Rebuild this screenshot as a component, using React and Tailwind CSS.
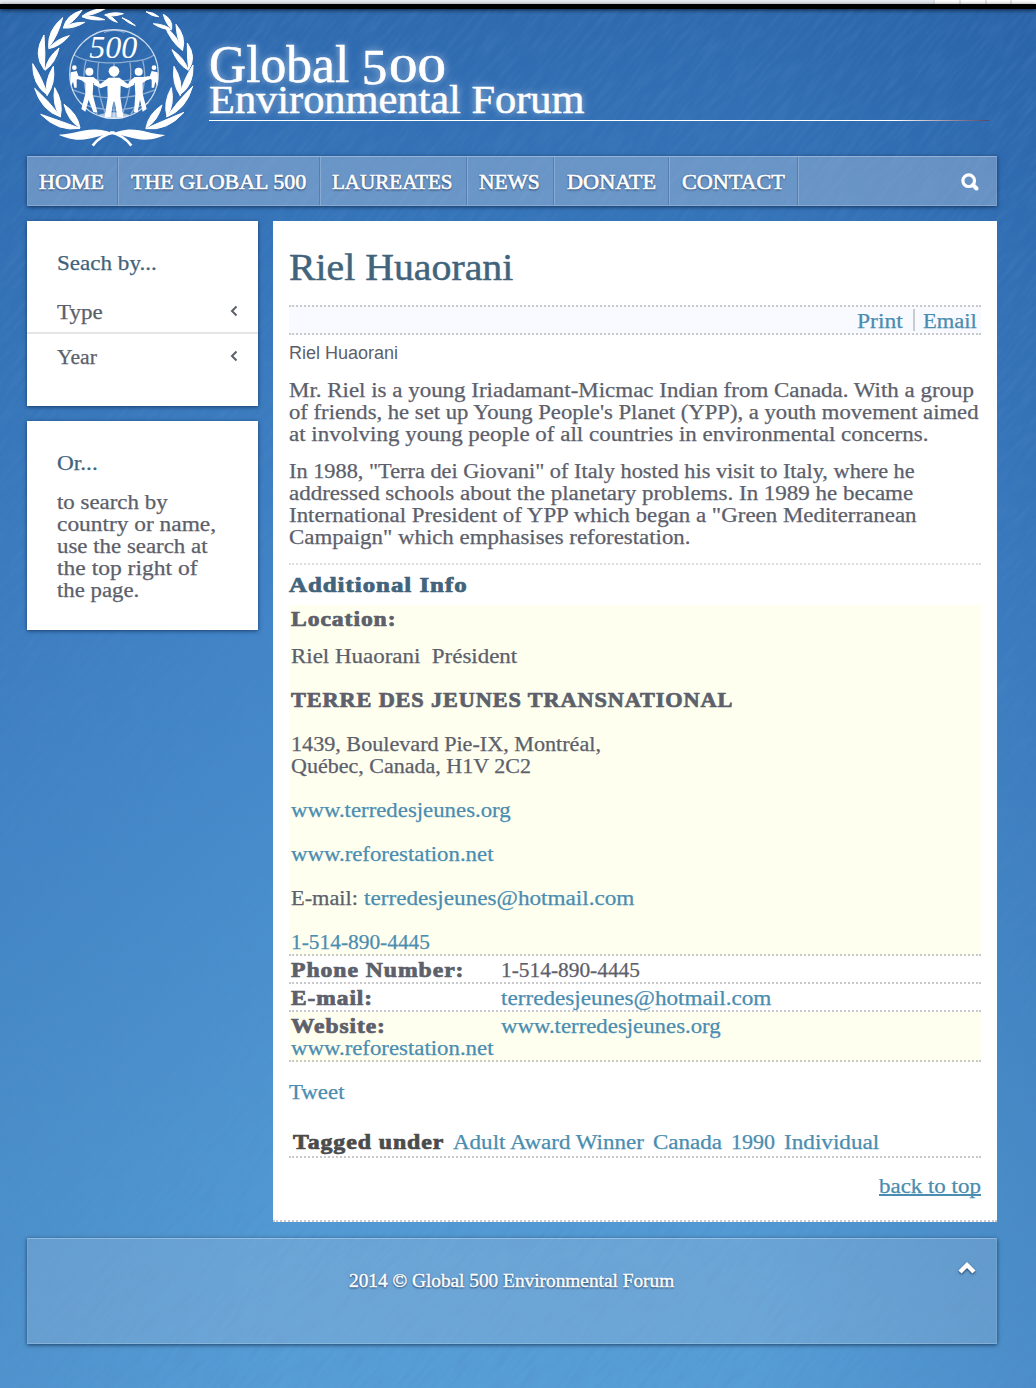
import React, { useLayoutEffect, useRef, useState } from 'react';

// A single line of text, widened so that it spans w pixels.
function Fit({ w, children, className = '' }) {
  const ref = useRef(null);
  const [k, setK] = useState(1);
  useLayoutEffect(() => {
    setK(w / ref.current.offsetWidth);
  }, []);
  return (
    <span className={`inline-block whitespace-pre ${className}`} style={{ width: w }}>
      <span ref={ref} className="inline-block origin-left" style={{ transform: `translateY(0.6px) scaleX(${k})` }}>{children}</span>
    </span>
  );
}

const link = 'text-[#4a8db0]';
const bold = 'font-bold tracking-[0.8px] [-webkit-text-stroke:0.7px_currentColor]';

function leaf([x1, y1, x2, y2, w = 20, b = 0]) {
  const dx = x2 - x1, dy = y2 - y1, l = Math.hypot(dx, dy);
  const nx = -dy / l, ny = dx / l;
  const mx = x1 + dx * 0.55, my = y1 + dy * 0.55;
  return `M${x1} ${y1}Q${mx + nx * (w + b)} ${my + ny * (w + b)} ${x2} ${y2}Q${mx - nx * (w - b)} ${my - ny * (w - b)} ${x1} ${y1}Z`;
}

const leaves = [
  [246, 30, 190, 82, 16, 6], [254, 66, 190, 83, 11, 0],
  [188, 52, 146, 142, 18, 8], [208, 106, 146, 145, 13, 0],
  [132, 104, 133, 208, 20, 16], [177, 143, 135, 210, 15, 0],
  [98, 190, 142, 284, 18, 10], [160, 198, 141, 286, 18, 0],
  [104, 264, 182, 350, 18, 12], [164, 262, 181, 349, 18, 0],
  [122, 342, 240, 384, 17, 16], [192, 312, 240, 383, 18, 0],
  [318, 24, 246, 48, 11, 2], [314, 58, 246, 49, 9, 0],
  [370, 40, 314, 44, 9, 0], [352, 66, 316, 42, 8, 0],
  [438, 34, 476, 49, 7, 0], [366, 52, 406, 76, 5, 0],
  [490, 42, 515, 86, 13, -5], [460, 70, 515, 88, 9, 0],
  [528, 72, 548, 149, 15, -6], [494, 76, 548, 151, 13, 0],
  [562, 128, 566, 208, 15, -12], [516, 148, 565, 210, 14, 0],
  [579, 194, 539, 284, 18, -10], [522, 198, 541, 286, 18, 0],
  [578, 258, 500, 350, 18, -12], [514, 262, 501, 349, 18, 0],
  [552, 336, 437, 385, 17, -16], [486, 314, 438, 383, 18, 0],
];

function Logo() {
  return (
    <svg viewBox="90 26 500 424" className="h-[141.3px] w-[166.7px] shrink-0" fill="white">
      {leaves.map((l, i) => <path key={i} d={leaf(l)} stroke="white" strokeWidth="3" strokeLinejoin="round" />)}
      <path d="M176 403C230 400 250 384 296 388 320 390 332 396 342 401 300 402 276 418 240 418 210 418 192 410 176 403Z" />
      <path d="M496 404C450 402 430 386 380 388 360 390 346 396 334 401 372 402 400 418 434 418 462 418 482 410 496 404Z" />
      <path d="M278 436Q302 404 344 396M394 436Q370 404 330 396" fill="none" stroke="white" strokeWidth="8" />
      <g fill="none" stroke="white" strokeWidth="4" opacity=".45">
        <path d="M222 164Q250 182 300 186T384 184Q440 182 462 164M209 222Q342 262 475 222M216 268Q342 318 468 268M240 308Q342 350 446 308M258 180Q236 262 292 342M296 186Q284 260 320 350M342 188V354M390 186Q400 260 364 350M428 180Q450 262 392 342M312 96Q342 84 374 96" />
      </g>
      <circle cx="342" cy="221" r="133" fill="none" stroke="white" strokeWidth="3.5" opacity=".75" />
      <text x="340" y="172" textAnchor="middle" fontSize="97" textLength="144" lengthAdjust="spacingAndGlyphs" className="[font-family:'Liberation_Serif',serif] italic">500</text>
      <circle cx="342" cy="213" r="16" />
      <path d="M326 232H358L382 250 400 244 403 253 382 264 362 256 361 290 370 350H352L344 304H340L332 350H314L323 290 322 256 302 264 281 253 284 244 302 250Z" />
      <circle cx="268" cy="214" r="12" />
      <path d="M256 230H280L298 245 294 255 280 248 278 282 292 336 280 336 266 298 256 334 244 326 256 280 256 248 244 240 232 236 235 228Z" />
      <circle cx="416" cy="214" r="12" />
      <path d="M428 230H404L386 245 390 255 404 248 406 282 402 336 413 336 420 298 428 334 440 326 428 280 428 248 440 240 452 236 449 228Z" />
      <circle cx="223" cy="202" r="7" />
      <path d="M212 216L230 212 238 234 230 238 230 262H223L219 244 213 258 211 236Z" />
      <circle cx="462" cy="202" r="7" />
      <path d="M473 216L455 212 447 234 455 238 455 262H462L466 244 472 258 474 236Z" />
      <path d="M292 344Q342 328 392 344L366 355H318Z" opacity=".6" />
    </svg>
  );
}

const nav = [
  ['HOME', 65, 'w-[90px] pl-[11px]'],
  ['THE GLOBAL 500', 175, 'w-[202px] pl-[13px]'],
  ['LAUREATES', 120, 'w-[147px] pl-[12px]'],
  ['NEWS', 61, 'w-[87px] pl-[12px]'],
  ['DONATE', 89, 'w-[115px] pl-[13px]'],
  ['CONTACT', 103, 'w-[129px] pl-[13px]'],
];

function Streaks() {
  return (
    <div className="pointer-events-none absolute inset-0 -z-10 overflow-hidden">
      <svg className="absolute -left-[400px] -top-[250px] h-[1900px] w-[1900px] -rotate-[50deg] opacity-30">
        <filter id="streaks" x="0" y="0" width="100%" height="100%">
          <feTurbulence type="fractalNoise" baseFrequency="0.03 0.22" numOctaves="3" seed="4" />
          <feColorMatrix values="0 0 0 0 0.08  0 0 0 0 0.25  0 0 0 0 0.55  1.8 0 0 0 -0.7" />
        </filter>
        <rect width="100%" height="100%" filter="url(#streaks)" />
      </svg>
    </div>
  );
}

const panel = 'border border-t-white/30 border-x-white/10 border-b-white/20 shadow-[0_1px_4px_rgba(0,20,50,0.65)]';
const dotB = 'border-b-2 border-dotted border-[#c8c9cb]';

export default function App() {
  return (
    <div className="relative isolate flex h-[1388px] w-[1036px] flex-col overflow-hidden bg-[linear-gradient(90deg,rgba(20,70,140,0.12),transparent_28%,transparent_72%,rgba(20,70,140,0.18)),linear-gradient(180deg,#2e69ae_0%,#3573b8_14%,#4285c8_45%,#5299d3_86%,#589ed6_100%)] font-['Liberation_Serif',serif] text-[20px] leading-[22px] text-[#5c606b] [-webkit-text-stroke:0.25px_currentColor]">
      <Streaks />
      <div className="flex h-1 shrink-0 justify-end bg-[#e9edf3]">
        <div className="flex w-[103px] gap-[2px] bg-[#e1e1e1] pl-[2px]">
          {[0, 1, 2, 3].map((i) => <div key={i} className="flex-1 bg-white" />)}
        </div>
      </div>
      <div className="h-[5px] shrink-0 bg-black shadow-[0_1px_4px_rgba(0,0,0,0.7)]" />

      <header className="flex h-[147px] shrink-0 pl-[30px]">
        <Logo />
        <div className="ml-[12px] flex w-[780px] flex-col pt-[27px] text-white [text-shadow:0_0_8px_rgba(255,255,255,0.6)] [-webkit-text-stroke:0.5px_white]">
          <div className="flex h-[43px] items-start text-[53px] leading-[54px]">
            <Fit w={140}>Global</Fit>
            <span className="relative top-[4px] ml-[13px] text-[51px]">5</span>
            <span className="relative top-[4px] ml-[2px] text-[41px]"><Fit w={57}>00</Fit></span>
          </div>
          <div className="h-[41px] text-[40px] leading-[40px]"><Fit w={375}>Environmental Forum</Fit></div>
          <div className="h-px bg-[linear-gradient(90deg,white_88%,rgba(90,60,90,0.8))]" />
        </div>
      </header>

      <nav className={`mx-[27px] flex h-[50px] w-[970px] shrink-0 bg-[#c8d2e2]/36 ${panel} text-white`}>
        {nav.map(([label, w, cls]) => (
          <a key={label} className={`${cls} flex shrink-0 items-center border-r border-[#4a6e9d]/60 shadow-[1px_0_0_rgba(255,255,255,0.2)] [text-shadow:0_1px_2px_rgba(0,20,50,0.9)] [-webkit-text-stroke:0.6px_white]`}>
            <Fit w={w}>{label}</Fit>
          </a>
        ))}
        <svg viewBox="0 0 18 18" className="mt-[16px] mr-[17px] ml-auto h-[18px] w-[18px]" fill="none" stroke="white">
          <circle cx="7.7" cy="7.7" r="5.8" strokeWidth="3.2" />
          <path d="M12 12L15.5 15.5" strokeWidth="4" strokeLinecap="round" />
        </svg>
      </nav>

      <div className="mt-[15px] ml-[27px] flex h-[1001px] shrink-0 items-start gap-[15px]">
        <aside className="flex w-[231px] flex-col gap-[15px]">
          <section className="h-[185px] bg-white pt-[30px] shadow-[0_1px_4px_rgba(0,20,50,0.6)]">
            <h3 className="pl-[30px] text-[21px] text-[#41647c]"><Fit w={100}>Seach by...</Fit></h3>
            {[['Type', 46], ['Year', 40]].map(([t, w], i) => (
              <div key={t} className={i ? 'flex h-[44px] items-center justify-between pr-5 pl-[30px]' : 'mt-[17px] flex h-[44px] items-center justify-between border-b-2 border-[#e5e5e5] pr-5 pl-[30px]'}>
                <Fit w={w}>{t}</Fit>
                <svg viewBox="0 0 8 12" className="h-3 w-2" fill="none" stroke="#5c606b" strokeWidth="2"><path d="M6.5 1.5L2 6L6.5 10.5" /></svg>
              </div>
            ))}
          </section>
          <section className="h-[209px] bg-white pt-[30px] pl-[30px] shadow-[0_1px_4px_rgba(0,20,50,0.6)]">
            <h3 className="mb-[17px] text-[21px] text-[#41647c]"><Fit w={41}>Or...</Fit></h3>
            {[['to search by', 111], ['country or name,', 159], ['use the search at', 151], ['the top right of', 140], ['the page.', 82]].map(([t, w]) => (
              <div key={t} className="h-[22px]"><Fit w={w}>{t}</Fit></div>
            ))}
          </section>
        </aside>

        <main className={`h-[1001px] w-[724px] bg-white px-4 ${dotB}`}>
          <h1 className="h-[84px] pt-[23px] text-[38px] leading-[44px] text-[#41647c] [-webkit-text-stroke:0.5px_currentColor]"><Fit w={224}>Riel Huaorani</Fit></h1>
          <div className={`flex h-[30px] items-center justify-end border-t-2 bg-[#f9faff] pr-1 ${dotB} ${link}`}>
            <Fit w={46}>Print</Fit>
            <span className="mr-[8px] ml-[10px] h-[22px] w-[2px] bg-[#c8cccf]" />
            <Fit w={54}>Email</Fit>
          </div>
          <div className="mt-[7px] h-[22px] font-['Liberation_Sans',sans-serif] text-[18px] [-webkit-text-stroke:0px]">Riel Huaorani</div>
          <div className="mt-[14px]">
            {[
              ['Mr. Riel is a young Iriadamant-Micmac Indian from Canada. With a group', 685],
              ["of friends, he set up Young People's Planet (YPP), a youth movement aimed", 690],
              ['at involving young people of all countries in environmental concerns.', 640],
            ].map(([t, w]) => <div key={t} className="h-[22px]"><Fit w={w}>{t}</Fit></div>)}
          </div>
          <div className="mt-[15px] h-[106px] border-b-2 border-dotted border-[#dddddd]">
            {[
              ['In 1988, "Terra dei Giovani" of Italy hosted his visit to Italy, where he', 626],
              ['addressed schools about the planetary problems. In 1989 he became', 624],
              ['International President of YPP which began a "Green Mediterranean', 628],
              ['Campaign" which emphasises reforestation.', 401],
            ].map(([t, w]) => <div key={t} className="h-[22px]"><Fit w={w}>{t}</Fit></div>)}
          </div>
          <h4 className={`h-[40px] pt-[8px] text-[#41647c] ${bold}`}><Fit w={179}>Additional Info</Fit></h4>
          <div className={`h-[351px] bg-[#fffff0] px-[2px] pt-[2px] ${dotB}`}>
            <div className={bold}><Fit w={105}>Location:</Fit></div>
            <div className="mt-[15px]"><Fit w={226}>{'Riel Huaorani\u00a0 Président'}</Fit></div>
            <div className={`mt-[22px] ${bold}`}><Fit w={442}>TERRE DES JEUNES TRANSNATIONAL</Fit></div>
            <div className="mt-[22px] h-[22px]"><Fit w={310}>1439, Boulevard Pie-IX, Montréal,</Fit></div>
            <div className="h-[22px]"><Fit w={240}>Québec, Canada, H1V 2C2</Fit></div>
            <div className={`mt-[22px] h-[22px] ${link}`}><Fit w={220}>www.terredesjeunes.org</Fit></div>
            <div className={`mt-[22px] h-[22px] ${link}`}><Fit w={203}>www.reforestation.net</Fit></div>
            <div className="mt-[22px] flex h-[22px] gap-[6px]"><Fit w={67}>E-mail:</Fit><span className={link}><Fit w={270}>terredesjeunes@hotmail.com</Fit></span></div>
            <div className={`mt-[22px] h-[22px] ${link}`}><Fit w={139}>1-514-890-4445</Fit></div>
          </div>
          <div className={`flex h-[28px] px-[2px] pt-[2px] ${dotB}`}>
            <span className={`w-[210px] ${bold}`}><Fit w={174}>Phone Number:</Fit></span><Fit w={139}>1-514-890-4445</Fit>
          </div>
          <div className={`flex h-[28px] px-[2px] pt-[2px] ${dotB}`}>
            <span className={`w-[210px] ${bold}`}><Fit w={82}>E-mail:</Fit></span><Fit w={270} className={link}>terredesjeunes@hotmail.com</Fit>
          </div>
          <div className={`h-[50px] bg-[#fffff0] px-[2px] pt-[2px] ${dotB}`}>
            <div className="flex h-[22px]"><span className={`w-[210px] ${bold}`}><Fit w={95}>Website:</Fit></span><Fit w={220} className={link}>www.terredesjeunes.org</Fit></div>
            <div className={link}><Fit w={203}>www.reforestation.net</Fit></div>
          </div>
          <div className={`mt-[18px] h-[22px] ${link}`}><Fit w={56}>Tweet</Fit></div>
          <div className={`mt-[26px] flex h-[30px] gap-[9px] pt-[2px] pl-[4px] ${dotB} ${link}`}>
            <span className={`text-[#4b4b4b] ${bold}`}><Fit w={151}>Tagged under</Fit></span>
            <Fit w={191}>Adult Award Winner</Fit><Fit w={69}>Canada</Fit><Fit w={44}>1990</Fit><Fit w={95}>Individual</Fit>
          </div>
          <div className={`mt-[16px] flex h-[22px] justify-end ${link}`}><span className="h-[22px] border-b-2 border-[#4a8db0]"><Fit w={102}>back to top</Fit></span></div>
        </main>
      </div>

      <footer className={`mt-[16px] ml-[27px] flex h-[106px] w-[970px] shrink-0 justify-end bg-[#c8d2e2]/20 ${panel} text-white`}>
        <div className="flex flex-1 justify-center pt-[30px] pl-[51px] text-[18px] [text-shadow:0_1px_2px_rgba(0,20,50,0.9)] [-webkit-text-stroke:0.4px_white]">
          <Fit w={325}>2014 © Global 500 Environmental Forum</Fit>
        </div>
        <svg viewBox="0 0 18 14" className="mt-[22px] mr-[20px] ml-[15px] h-[14px] w-[18px] drop-shadow-[0_1px_1px_rgba(0,20,50,0.7)]" fill="none" stroke="white" strokeWidth="4.4"><path d="M2 11L9 4L16 11" /></svg>
      </footer>
    </div>
  );
}
